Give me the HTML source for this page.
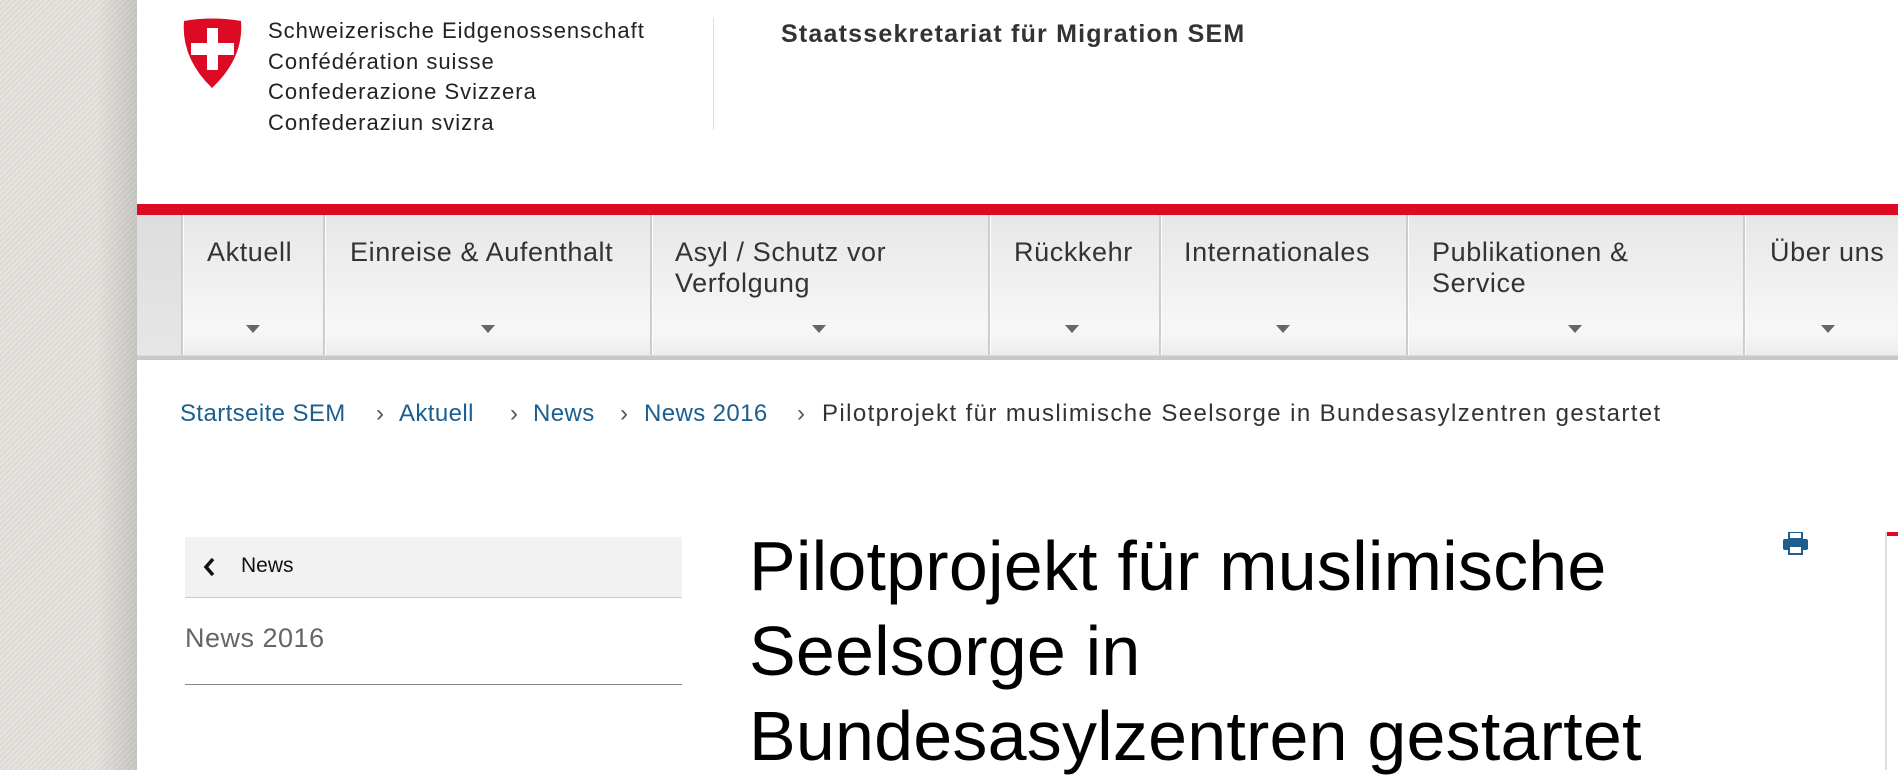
<!DOCTYPE html>
<html><head><meta charset="utf-8"><style>
*{margin:0;padding:0;box-sizing:border-box}
body{width:1898px;height:770px;overflow:hidden;background:#fff;font-family:"Liberation Sans",sans-serif;position:relative}
.strip{position:absolute;left:0;top:0;width:137px;height:770px;background:repeating-linear-gradient(135deg,#e6e4df 0 2px,#dcdad5 2px 4px)}
.strip:after{content:"";position:absolute;right:0;top:0;width:40px;height:100%;background:linear-gradient(90deg,rgba(0,0,0,0),rgba(0,0,0,.12))}
.abs{position:absolute}
.fed{left:268px;top:16px;font-size:22px;line-height:30.5px;color:#222;letter-spacing:1px}
.div{left:713px;top:18px;width:1px;height:112px;background:#ddd}
.sem{left:781px;top:20px;font-size:25px;font-weight:bold;color:#333;letter-spacing:1.2px}
.red{left:137px;top:204px;width:1761px;height:11px;background:#dc0a23}
.nav{left:137px;top:215px;width:1761px;height:145px;background:linear-gradient(#e7e7e7,#f7f7f7 80%,#ececec 97%,#c8c8c8 97%)}
.sep{position:absolute;top:215px;width:3px;height:140px;border-left:2px solid #ccc;border-right:1px solid #fff}
.ni{position:absolute;top:237px;font-size:27px;line-height:31px;color:#333;letter-spacing:.6px}
.ar{position:absolute;top:325px;width:0;height:0;border-left:7px solid transparent;border-right:7px solid transparent;border-top:8px solid #666}
.bc{top:400px;font-size:24px;color:#333;white-space:nowrap;letter-spacing:.4px}
.bc a{color:#1b5e8f;text-decoration:none}
h1{position:absolute;left:749px;top:524px;font-size:70px;font-weight:normal;line-height:85px;color:#000;letter-spacing:.2px}
</style></head><body>
<div class="strip"></div>
<svg class="abs" style="left:181px;top:18px" width="63" height="70" viewBox="0 0 63 70"><path d="M3 3 Q31 -2 60 3 Q63 40 31 70 Q0 40 3 3Z" fill="#dc0a23"/><rect x="26" y="10" width="11" height="42" fill="#fff"/><rect x="10" y="25" width="43" height="12" fill="#fff"/></svg>
<div class="abs fed">Schweizerische Eidgenossenschaft<br>Confédération suisse<br>Confederazione Svizzera<br>Confederaziun svizra</div>
<div class="abs div"></div>
<div class="abs sem">Staatssekretariat für Migration SEM</div>
<div class="abs red"></div>
<div class="abs nav"></div>
<div class="abs" style="left:137px;top:215px;width:45px;height:140px;background:linear-gradient(#ddd,#e6e6e6)"></div>
<div class="sep" style="left:181px"></div><div class="sep" style="left:323px"></div><div class="sep" style="left:650px"></div><div class="sep" style="left:988px"></div><div class="sep" style="left:1159px"></div><div class="sep" style="left:1406px"></div><div class="sep" style="left:1743px"></div>
<div class="ni" style="left:207px">Aktuell</div>
<div class="ni" style="left:350px">Einreise &amp; Aufenthalt</div>
<div class="ni" style="left:675px">Asyl / Schutz vor<br>Verfolgung</div>
<div class="ni" style="left:1014px">Rückkehr</div>
<div class="ni" style="left:1184px">Internationales</div>
<div class="ni" style="left:1432px">Publikationen &amp;<br>Service</div>
<div class="ni" style="left:1770px">Über uns</div>
<div class="ar" style="left:246px"></div><div class="ar" style="left:481px"></div><div class="ar" style="left:812px"></div><div class="ar" style="left:1065px"></div><div class="ar" style="left:1276px"></div><div class="ar" style="left:1568px"></div><div class="ar" style="left:1821px"></div>
<div class="abs bc" style="left:180px"><a>Startseite SEM</a></div>
<div class="abs bc" style="left:376px;color:#555">›</div>
<div class="abs bc" style="left:399px"><a>Aktuell</a></div>
<div class="abs bc" style="left:510px;color:#555">›</div>
<div class="abs bc" style="left:533px"><a>News</a></div>
<div class="abs bc" style="left:620px;color:#555">›</div>
<div class="abs bc" style="left:644px"><a>News 2016</a></div>
<div class="abs bc" style="left:797px;color:#555">›</div>
<div class="abs bc" style="left:822px;letter-spacing:1.4px">Pilotprojekt für muslimische Seelsorge in Bundesasylzentren gestartet</div>
<div class="abs" style="left:185px;top:537px;width:497px;height:61px;background:#f2f2f2;border-bottom:1px solid #ccc"></div>
<svg class="abs" style="left:201px;top:556px" width="16" height="22" viewBox="0 0 16 22"><path d="M12 3 L5 11 L12 19" stroke="#111" stroke-width="3.5" fill="none"/></svg>
<div class="abs" style="left:241px;top:554px;font-size:21px;color:#111">News</div>
<div class="abs" style="left:185px;top:623px;font-size:27px;color:#666;letter-spacing:.5px">News 2016</div>
<div class="abs" style="left:185px;top:684px;width:497px;height:1px;background:#888"></div>
<h1>Pilotprojekt für muslimische<br>Seelsorge in<br>Bundesasylzentren gestartet</h1>
<svg class="abs" style="left:1783px;top:532px" width="25" height="23" viewBox="0 0 25 23"><rect x="6" y="0" width="13" height="7" fill="#fff" stroke="#1b5e8f" stroke-width="2"/><rect x="0" y="7" width="25" height="11" rx="2" fill="#1b5e8f"/><rect x="6" y="14" width="13" height="8" fill="#fff" stroke="#1b5e8f" stroke-width="2"/></svg>
<div class="abs" style="left:1885px;top:532px;width:2px;height:238px;background:#ddd"></div>
<div class="abs" style="left:1887px;top:532px;width:11px;height:4px;background:#dc0a23"></div>
</body></html>
